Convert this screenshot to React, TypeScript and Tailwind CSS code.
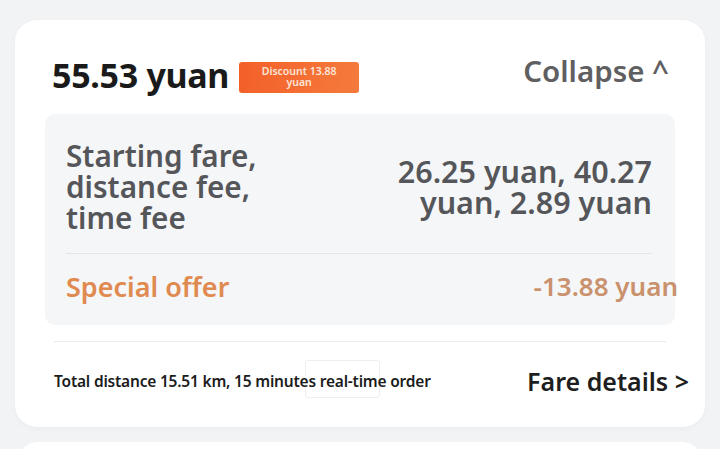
export default function App() {
  return (
    <div
      className="h-screen overflow-hidden bg-[#f2f3f5] px-[15px] pt-[20px]"
      style={{ fontFamily: '"Noto Sans", "Open Sans", sans-serif' }}
    >
      <div className="relative h-[407px] rounded-[22px] bg-white px-[30px] shadow-[0_2px_6px_rgba(0,0,0,0.03)]">
        {/* header */}
        <div className="flex h-[94px] items-center justify-between pl-[7px] pr-[6px] pt-[16px]">
          <div className="flex items-center gap-[10px]">
            <span className="text-[34px] font-bold leading-none tracking-[-0.3px] text-[#1a1a1a]">
              55.53 yuan
            </span>
            <span className="mt-[4px] flex h-[31px] w-[120px] flex-col items-center justify-center rounded-[3px] bg-gradient-to-r from-[#f3602a] to-[#f57a3c] text-center text-[10.5px] font-semibold leading-[11px] text-[#fde6d8]">
              <span>Discount 13.88</span>
              <span>yuan</span>
            </span>
          </div>
          <span className="mb-[8px] text-[29.5px] font-semibold leading-none text-[#5f5f61]">
            Collapse ^
          </span>
        </div>

        {/* breakdown */}
        <div className="h-[211px] rounded-[10px] bg-[#f5f6f8] px-[21px] pr-[23px] pt-[26px]">
          <div className="flex items-center justify-between">
            <div className="text-[29.7px] font-semibold leading-[31px] text-[#55565a]">
              <div>Starting fare,</div>
              <div>distance fee,</div>
              <div>time fee</div>
            </div>
            <div className="text-right text-[30.5px] font-semibold leading-[31px] text-[#55565a]">
              <div>26.25 yuan, 40.27</div>
              <div>yuan, 2.89 yuan</div>
            </div>
          </div>
          <div className="mt-[20px] h-px bg-[#e4e5e7]" />
          <div className="-mr-[26px] flex items-center justify-between pt-[17px]">
            <span className="text-[27px] font-semibold leading-[31px] text-[#e08a50]">
              Special offer
            </span>
            <span className="text-[26px] font-semibold leading-[31px] text-[#c9916c]">
              -13.88 yuan
            </span>
          </div>
        </div>

        {/* footer */}
        <div className="mx-[9px] mt-[16px] h-px bg-[#ececee]" />
        <div className="relative -mr-[14px] flex items-center justify-between pl-[9px] pt-[23px]">
          <span className="relative z-10 text-[15.5px] font-semibold leading-[32px] tracking-[-0.2px] text-[#1c1c1c]">
            Total distance 15.51 km, 15 minutes real-time order
          </span>
          <span className="text-[25px] font-semibold leading-[32px] text-[#1e1e1e]">
            Fare details &gt;
          </span>
          <div className="absolute left-[260px] top-[18px] h-[38px] w-[75px] rounded-[3px] border border-[#efefef]" />
        </div>
      </div>

      {/* next card */}
      <div className="mx-[3px] mt-[15px] h-[40px] rounded-[22px] bg-white" />
    </div>
  );
}
